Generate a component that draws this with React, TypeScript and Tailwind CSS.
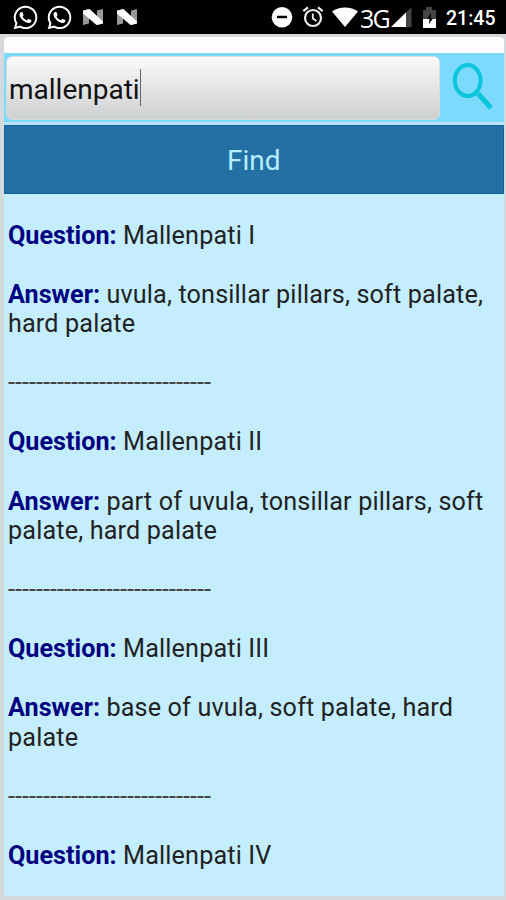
import { FaWhatsapp } from "react-icons/fa";

const cards = [
  { q: "Mallenpati I", a: "uvula, tonsillar pillars, soft palate, hard palate" },
  { q: "Mallenpati II", a: "part of uvula, tonsillar pillars, soft palate, hard palate" },
  { q: "Mallenpati III", a: "base of uvula, soft palate, hard palate" },
];

function NougatIcon({ className }: { className: string }) {
  return (
    <svg viewBox="0 0 22 16" className={`h-4 w-[22px] shrink-0 ${className}`}>
      <path d="M1 2 7 0v14.5L1 16ZM15 1.5 21 0v14.5L15 16Z" fill="#999" />
      <path d="M1 1.5 7.5 0 21 12.5v2L14.5 16 1 4.5Z" fill="#fff" />
    </svg>
  );
}

function StatusBar() {
  return (
    <header className="flex h-[34px] shrink-0 items-center bg-black text-white">
      <FaWhatsapp className="ml-[12px] size-[27px] shrink-0" />
      <FaWhatsapp className="ml-[7px] size-[27px] shrink-0" />
      <NougatIcon className="ml-[9px]" />
      <NougatIcon className="ml-3" />
      <svg viewBox="0 0 22 22" className="ml-auto size-[22px] shrink-0">
        <circle cx="11" cy="11.3" r="10.3" fill="#fff" />
        <path d="M6 11h10" stroke="#000" strokeWidth="2.5" />
      </svg>
      <svg viewBox="0 0 22 22" className="ml-[9px] size-[22px] shrink-0" fill="none" stroke="#eee">
        <circle cx="11" cy="12" r="8" strokeWidth="2.2" />
        <path d="M1.3 5.2 6 1.4M16 1.4l4.7 3.8" strokeWidth="2.2" />
        <path d="M10.8 7.5v5l3.7 2.5" strokeWidth="1.8" />
      </svg>
      <svg viewBox="0 0 26 20" className="ml-2 h-5 w-[26px] shrink-0">
        <path d="M0 4.5C7-.8 19-.8 26 4.5L13 20Z" fill="#fff" />
      </svg>
      <span className="ml-0.5 mr-0.5 w-[27px] whitespace-nowrap pt-0.5 font-['Open_Sans',sans-serif] text-[25px] leading-[32px] tracking-[-1.8px]">3G</span>
      <svg viewBox="0 0 21 20" className="ml-0.5 h-5 w-[21px] shrink-0">
        <path d="M0 20 20.5 0v20Z" fill="#444" />
        <path d="M0 20 15 5.4V20Z" fill="#fff" />
      </svg>
      <svg viewBox="0 0 15 21" className="ml-[10px] h-[21px] w-[15px] shrink-0">
        <path d="M1 3h3V0h6v3h4v9H1Z" fill="#444" />
        <path d="M1 12h13v9H1Z" fill="#fff" />
        <path d="M9 6 5 12h2.5L7 17l4-5.5H8.5Z" fill="#000" />
      </svg>
      <span className="ml-[9px] mr-2.5 w-[50px] whitespace-nowrap pt-[3px] text-[19.5px] font-medium">21:45</span>
    </header>
  );
}

function Label({ children }: { children: string }) {
  return <span className="font-bold tracking-normal text-[#000080]">{children}</span>;
}

export default function App() {
  return (
    <div className="flex h-[900px] w-[506px] flex-col overflow-hidden bg-black font-[Roboto,sans-serif]">
      <StatusBar />
      <main className="flex flex-1 flex-col overflow-hidden bg-[#d5d9dc] pb-1 pl-[3.5px] pr-0.5 pt-[3px]">
        <div className="h-[16px] shrink-0 rounded-t-[4px] bg-[#fdfdfd]" />
        <div className="flex h-[69px] shrink-0 bg-[#7cdafd] pl-[2.5px] pt-[3px]">
          <div className="flex h-[64px] w-[434px] items-center rounded-[6px] border border-[#d5dde0] bg-linear-to-b from-[#fafafa] to-[#cfd0d2] pl-0.5 pt-1">
            <span className="text-[28px] text-[#111]">mallenpati</span>
            <span className="-mt-1.5 h-[37px] w-px bg-[#666]" />
          </div>
          <svg viewBox="0 0 44 50" className="ml-[11px] mt-[5px] h-[50px] w-[44px] shrink-0" fill="none" stroke="#0ac5dc">
            <ellipse cx="16.7" cy="19.5" rx="12.9" ry="15.4" strokeWidth="4" />
            <path d="m27 32.5 13 14.5" strokeWidth="5" />
          </svg>
        </div>
        <div className="h-[3px] shrink-0 bg-[#b9e4f8]" />
        <button className="h-[69px] shrink-0 border border-[#11659a] bg-[#2470a5] pt-[3px] text-[28px] text-[#b5edff]">Find</button>
        <section className="flex-1 overflow-hidden rounded-b-[3px] bg-[#c4eeff] pl-[4.5px] pt-[26.6px] text-[25.2px] leading-[29.55px] tracking-[0.15px] text-[#222]">
          {cards.map((card) => (
            <article key={card.q}>
              <p><Label>Question:</Label> {card.q}</p>
              <p className="mt-[29.55px]"><Label>Answer:</Label> {card.a}</p>
              <p className="my-[29.55px] tracking-[0.04px] text-[#444]">-----------------------------</p>
            </article>
          ))}
          <p><Label>Question:</Label> Mallenpati IV</p>
        </section>
      </main>
    </div>
  );
}
